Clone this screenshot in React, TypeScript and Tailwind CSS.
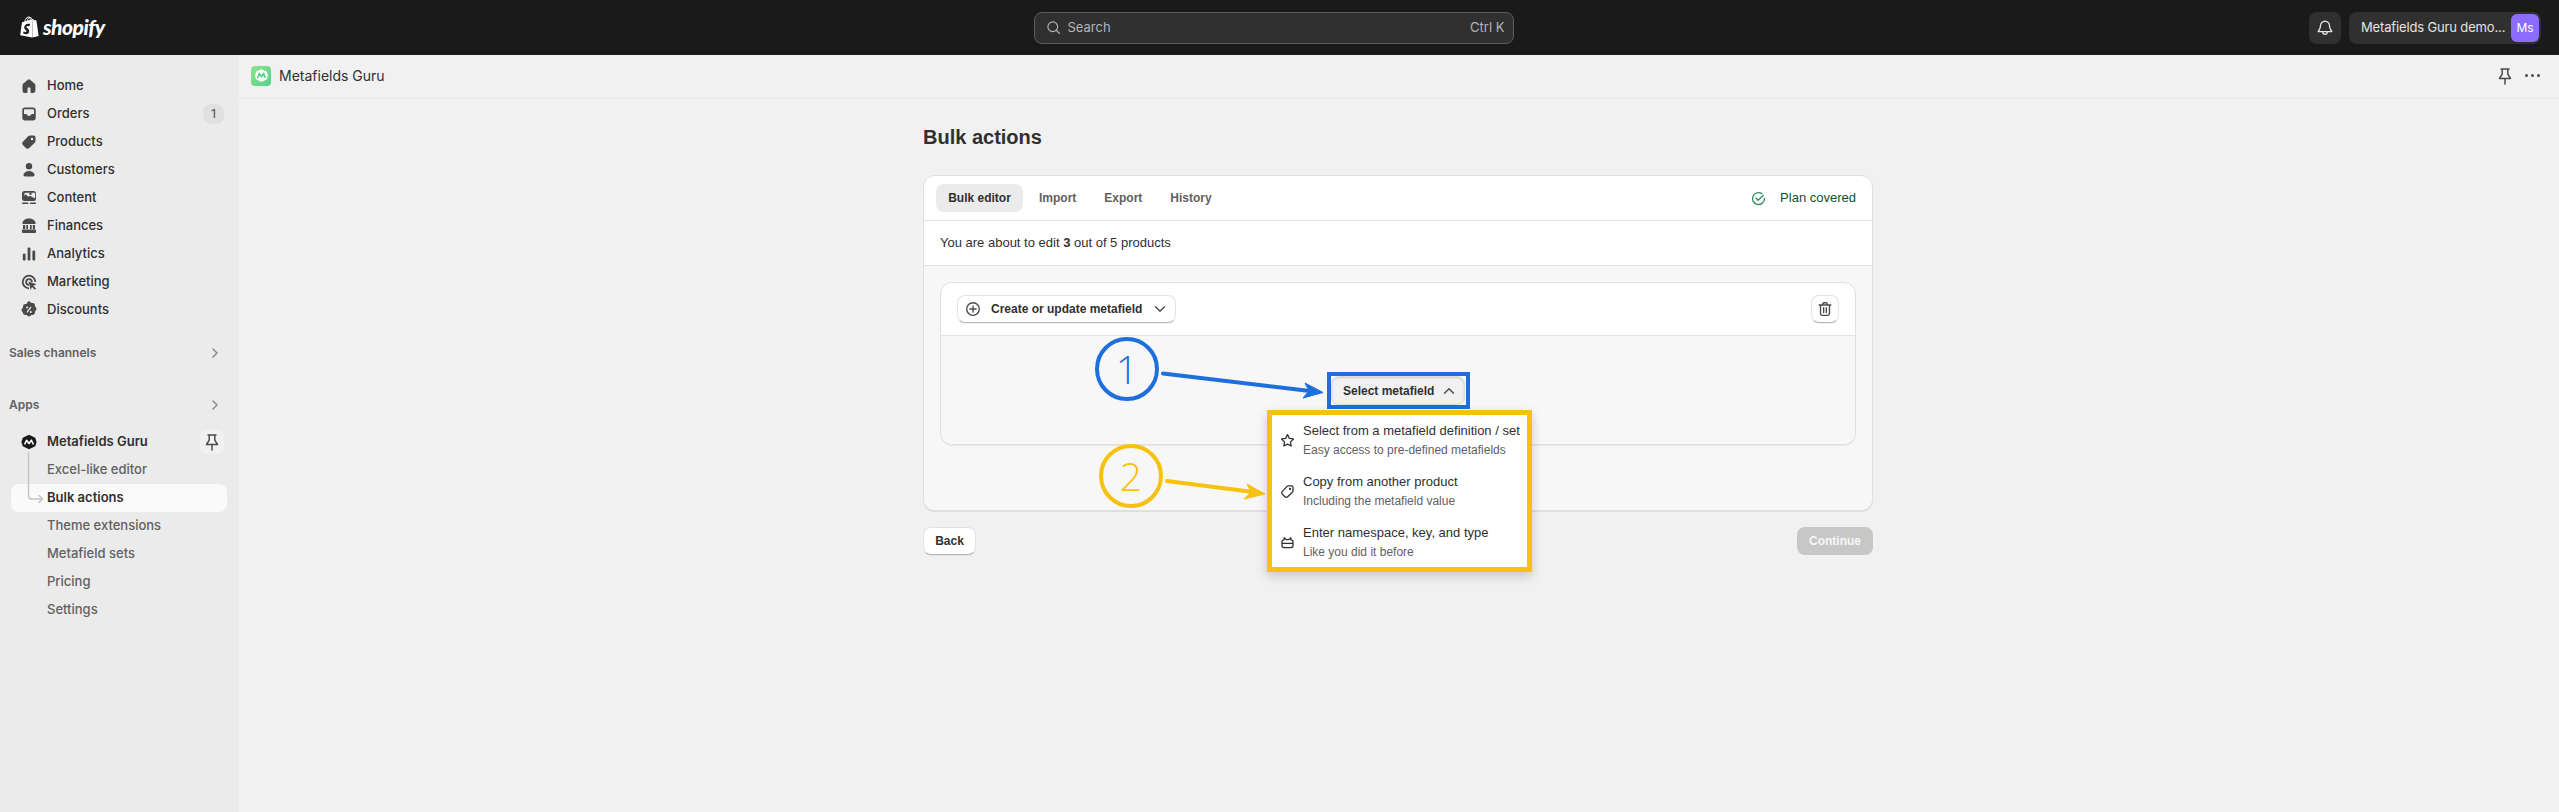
import React from "react";
import { SiShopify } from "react-icons/si";

const inter = "font-['Inter',sans-serif]";
const arial = "font-['Liberation_Sans',Arial,sans-serif]";

type IconProps = { className?: string };
const Ic = ({ children, className = "w-5 h-5 text-[#4a4a4a]" }: { children: React.ReactNode; className?: string }) => (
  <svg viewBox="0 0 20 20" fill="currentColor" className={`${className} shrink-0`}>{children}</svg>
);

const HomeI = () => <Ic><path d="M8.900 3.700a1.700 1.700 0 0 1 2.200 0l4.400 3.700c.6.5.9 1.100.9 1.900v5.400c0 1.200-1 2.300-2.300 2.300h-1.600c-.5 0-1-.4-1-1v-3.200a1.500 1.500 0 0 0-3 0V16c0 .6-.5 1-1 1H5.800a2.300 2.300 0 0 1-2.300-2.300V9.300c0-.8.3-1.400.9-1.900z" /></Ic>;
const OrdersI = () => <Ic><path fillRule="evenodd" d="M6 3.500h8A2.700 2.700 0 0 1 16.700 6.200v7.600A2.700 2.700 0 0 1 14 16.500H6a2.700 2.700 0 0 1-2.700-2.700V6.200A2.700 2.700 0 0 1 6 3.500M5 6.200v3.900h1.800c.7 0 1.200.4 1.500 1 .2.5.6.9 1.700.9s1.500-.4 1.700-.9c.3-.6.8-1 1.500-1H15V6.200C15 5.600 14.600 5.200 14 5.200H6c-.6 0-1 .4-1 1" /></Ic>;
const TagI = () => <Ic><path fillRule="evenodd" d="M11 3.500h3.700c1 0 1.800.8 1.800 1.800V9c0 .7-.3 1.300-.8 1.800l-5.500 5.300c-.9.900-2.400.9-3.300 0L3.900 13.100c-.9-.9-.9-2.400 0-3.300L9.200 4.300c.5-.5 1.100-.8 1.800-.8M13 8.200a1.200 1.200 0 1 0 0-2.400 1.200 1.200 0 0 0 0 2.400" /></Ic>;
const PersonI = () => <Ic><circle cx="10" cy="6.200" r="3.200" /><path d="M4.500 14.300c.8-2 2.900-3.300 5.500-3.300s4.700 1.300 5.500 3.300c.4 1.100-.4 2.200-1.600 2.200H6.100c-1.200 0-2-1.100-1.600-2.200" /></Ic>;
const ContentI = () => <Ic><path fillRule="evenodd" d="M5.500 3h9A2.500 2.500 0 0 1 17 5.500v5a2.500 2.500 0 0 1-2.500 2.500h-9A2.500 2.500 0 0 1 3 10.500v-5A2.500 2.500 0 0 1 5.500 3m-.8 5 2-1.800 2.300 2.300 2.500-.4 3.800 2.200c.5-.2.900-.8.900-1.300V5.500c0-.5-.4-.8-.9-.8h-9c-.5 0-.8.3-.8.800zM11.500 7a1.200 1.200 0 1 0 0-2.400 1.200 1.200 0 0 0 0 2.400" /><rect x="3" y="14.500" width="6.500" height="1.600" rx=".7" /><rect x="11" y="14.500" width="6" height="1.600" rx=".7" /></Ic>;
const BankI = () => <Ic><path d="M10 2.500c3.400 0 6.500 2 6.500 4.500v1H3.500V7c0-2.500 3.100-4.500 6.500-4.500" /><path d="M4 9h2.200v4H4zM7.300 9h1.700v4H7.300zM11 9h1.700v4H11zM13.800 9H16v4h-2.200z" /><path d="M3 13.500h14V16c0 .5-.4 1-1 1H4c-.6 0-1-.5-1-1z" /></Ic>;
const ChartI = () => <Ic><rect x="3.800" y="9.500" width="2.800" height="7" rx="1.200" /><rect x="8.600" y="3.500" width="2.800" height="13" rx="1.200" /><rect x="13.400" y="6.500" width="2.800" height="10" rx="1.200" /></Ic>;
const TargetI = () => <Ic><path fillRule="evenodd" d="M10 2.800a7.200 7.200 0 0 1 7.200 7.200h-1.800A5.400 5.400 0 1 0 10 15.400v1.800A7.200 7.200 0 1 1 10 2.800m0 3.400A3.800 3.800 0 0 1 13.800 10H12a2 2 0 1 0-2 2v1.800a3.800 3.800 0 1 1 0-7.600" /><path d="m9.500 9.500 8 2.700-3.200 1.500 2.800 2.800-1.300 1.300-2.800-2.800-1.300 3z" /></Ic>;
const DiscountI = () => <Ic><path fillRule="evenodd" d="M8.300 2.700a2.400 2.400 0 0 1 3.400 0l.7.7h1.200a2.400 2.400 0 0 1 2.400 2.400v1.100l.8.800a2.400 2.400 0 0 1 0 3.400l-.8.800v1.100a2.400 2.400 0 0 1-2.400 2.400h-1.200l-.7.700a2.400 2.400 0 0 1-3.400 0l-.7-.7H6.400A2.400 2.400 0 0 1 4 14.100V13l-.8-.8a2.400 2.400 0 0 1 0-3.400L4 8V6.900a2.400 2.400 0 0 1 2.400-2.400h1.200zM8.200 9a1 1 0 1 0 0-2 1 1 0 0 0 0 2m3.600 4.500a1 1 0 1 0 0-2 1 1 0 0 0 0 2m.7-5.500-.9-.9-4.100 5.300.9.800z" transform="translate(0 -.5)" /></Ic>;
const Pin = ({ className }: IconProps) => (
  <svg viewBox="0 0 20 20" fill="none" stroke="currentColor" strokeWidth="1.500" strokeLinejoin="round" strokeLinecap="round" className={className}>
    <path d="M6 3h8M7.200 3v5.200L4.500 12.500h11l-2.700-4.300V3M10 12.500V18" />
  </svg>
);
const Chevron = ({ up, right, className }: { up?: boolean; right?: boolean; className?: string }) => (
  <svg viewBox="0 0 20 20" fill="none" stroke="currentColor" strokeWidth="1.500" strokeLinecap="round" strokeLinejoin="round" className={className}>
    <path d={right ? "m8 6 4 4-4 4" : up ? "m5 12.500 5-5 5 5" : "m5 7.500 5 5 5-5"} />
  </svg>
);
const MBadge = () => (
  <svg viewBox="0 0 20 20" className="w-4 h-4 shrink-0">
    <path d="M10 .8 17.800 4.600 19.500 10 17.800 15.400 10 19.200 2.200 15.400.5 10 2.200 4.600z" fill="#1a1a1a" />
    <path d="M4.500 13 7 7.800 10 11.800 13 7.800 15.500 13" fill="none" stroke="#fff" strokeWidth="2" strokeLinejoin="round" />
  </svg>
);

const nav: [string, React.ReactNode][] = [
  ["Home", <HomeI />], ["Orders", <OrdersI />], ["Products", <TagI />], ["Customers", <PersonI />], ["Content", <ContentI />],
  ["Finances", <BankI />], ["Analytics", <ChartI />], ["Marketing", <TargetI />], ["Discounts", <DiscountI />],
];

function Sidebar() {
  return (
    <aside className={`w-[239px] shrink-0 bg-[#ebebeb] pt-[17px] ${inter} text-[13px] text-[#303030]`}>
      <div className="flex flex-col">
        {nav.map(([label, icon]) => (
          <div key={label} className="h-7 pl-[19px] pr-[15px] flex items-center font-[550]">
            <span className="w-7 flex">{icon}</span>
            <span className="flex-1">{label}</span>
            {label === "Orders" && <span className="w-[21px] h-5 rounded-lg bg-[#e0e0e0] text-[#616161] text-xs font-medium flex items-center justify-center">1</span>}
          </div>
        ))}
      </div>
      <div className="mt-[15px] h-7 pl-[9px] pr-[14px] flex items-center justify-between text-xs font-[600] text-[#616161]">
        <span>Sales channels</span><Chevron right className="w-5 h-5 text-[#8a8a8a]" />
      </div>
      <div className="mt-6 h-7 pl-[9px] pr-[14px] flex items-center justify-between text-xs font-[600] text-[#616161]">
        <span>Apps</span><Chevron right className="w-5 h-5 text-[#8a8a8a]" />
      </div>
      <div className="relative mt-[9px]">
        <div className="h-7 pl-[21px] pr-[15px] flex items-center font-[600]">
          <span className="w-[26px] flex"><MBadge /></span>
          <span className="flex-1">Metafields Guru</span>
          <span className="w-6 h-6 rounded-md bg-[#f1f1f1] flex items-center justify-center"><Pin className="w-5 h-5 text-[#4a4a4a]" /></span>
        </div>
        <svg viewBox="0 0 20 52" className="absolute left-[25px] top-[24px] w-5 h-[52px]" fill="none" stroke="#c4c4c4" strokeWidth="1.400" strokeLinecap="round" strokeLinejoin="round">
          <path d="M3.500 1v43c0 2 1 3 3 3h11M14 43.500l3.500 3.500-3.500 3.500" />
        </svg>
        <div className="text-[#616161] font-[450]">
          {["Excel-like editor", "Bulk actions", "Theme extensions", "Metafield sets", "Pricing", "Settings"].map((t) =>
            t === "Bulk actions" ? (
              <div key={t} className="mx-[11px] w-[216px] h-7 rounded-lg bg-[#fafafa] pl-9 flex items-center text-[#303030] font-[600]">{t}</div>
            ) : (
              <div key={t} className="h-7 pl-[47px] flex items-center">{t}</div>
            )
          )}
        </div>
      </div>
    </aside>
  );
}

function TopBar() {
  return (
    <header className={`h-[55px] shrink-0 bg-[#1a1a1a] flex items-center justify-between pl-[19px] pr-[18px] ${inter}`}>
      <div className="w-[400px] flex items-center text-white">
        <SiShopify className="w-[21px] h-[24px] -mt-[2px]" />
        <span className="ml-[3px] font-['Lato',sans-serif] italic font-black text-[21px] leading-none tracking-[-0.5px] -mt-[3px]">shopify</span>
      </div>
      <div className="w-[480px] h-8 rounded-lg bg-[#303030] border border-[#5c5c5c] flex items-center justify-between pl-[11px] pr-2 text-[13px] text-[#b5b5b5] -ml-[13px]">
        <div className="flex items-center gap-[7px]">
          <svg viewBox="0 0 20 20" fill="none" stroke="currentColor" strokeWidth="1.500" strokeLinecap="round" className="w-[15px] h-[15px]"><circle cx="9" cy="9" r="6.500" /><path d="m14 14 4 4" /></svg>
          <span>Search</span>
        </div>
        <span>Ctrl K</span>
      </div>
      <div className="w-[400px] flex items-center justify-end gap-2">
        <span className="w-8 h-8 rounded-lg bg-[#303030] flex items-center justify-center text-[#e3e3e3]">
          <svg viewBox="0 0 20 20" fill="none" stroke="currentColor" strokeWidth="1.500" strokeLinejoin="round" className="w-[18px] h-[18px]"><path d="M10 2.500a5 5 0 0 0-5 5c0 4-2.500 5.500-2.500 6.500h15c0-1-2.500-2.500-2.500-6.500a5 5 0 0 0-5-5ZM7.500 14.500a2.500 2.500 0 0 0 5 0" /></svg>
        </span>
        <div className="w-[192px] h-8 rounded-lg bg-[#303030] flex items-center justify-between pl-[12px] pr-[2px] text-[13px] tracking-[-0.15px] text-[#e3e3e3]">
          <span className="whitespace-nowrap">Metafields Guru demo...</span>
          <span className="w-7 h-7 shrink-0 rounded-md bg-[#8c6cff] text-white text-xs flex items-center justify-center">Ms</span>
        </div>
      </div>
    </header>
  );
}

function PluginHeader() {
  return (
    <div className="h-11 shrink-0 border-b border-[#e8e8e8] pl-3 pr-[19px] flex items-center justify-between">
      <div className="flex items-center gap-2">
        <span className="w-5 h-5 rounded-[4px] bg-gradient-to-br from-[#8fe58a] to-[#4fd28a] flex items-center justify-center -mt-[2px]">
          <svg viewBox="0 0 20 20" className="w-[17px] h-[17px]"><path d="M10 2.500 16.500 5.500 17.500 10 16.500 14.500 10 17.500 3.500 14.500 2.500 10 3.500 5.500z" fill="#fff" /><path d="M5.500 13 7.500 7.500 10 11.500 12.500 7.500 14.500 13" fill="none" stroke="#55d37e" strokeWidth="1.800" strokeLinejoin="round" /></svg>
        </span>
        <span className={`${inter} text-sm text-[#303030] -mt-[2px]`}>Metafields Guru</span>
      </div>
      <div className="flex items-center gap-[10px] text-[#4a4a4a] -mt-[2px]">
        <Pin className="w-5 h-5" />
        <span className="flex gap-[2.500px]"><i className="w-[3.500px] h-[3.500px] rounded-full bg-[#4a4a4a]" /><i className="w-[3.500px] h-[3.500px] rounded-full bg-[#4a4a4a]" /><i className="w-[3.500px] h-[3.500px] rounded-full bg-[#4a4a4a]" /></span>
      </div>
    </div>
  );
}

const btn = "bg-white rounded-lg border border-[#e3e3e3] border-b-[#b5b5b5] shadow-[0_1px_0_rgba(0,0,0,0.05)]";

function MenuItem({ icon, title, sub }: { icon: React.ReactNode; title: string; sub: string }) {
  return (
    <div className="h-[51px] flex items-center pl-[7px]">
      <span className="w-6 flex">{icon}</span>
      <div className="flex flex-col gap-[3px]">
        <span className="text-[13px] leading-[17px] text-[#303030] whitespace-nowrap">{title}</span>
        <span className="text-xs leading-[17px] text-[#616161] whitespace-nowrap">{sub}</span>
      </div>
    </div>
  );
}

function Card() {
  return (
    <div className="rounded-xl bg-white border border-[#e0e0e0] shadow-[0_1px_0_rgba(0,0,0,0.08)]">
      <div className="h-[45px] border-b border-[#e3e3e3] pl-3 pr-4 flex items-center justify-between">
        <div className="flex items-center text-xs font-bold text-[#616161]">
          <span className="w-[87px] h-7 rounded-lg bg-[#ebebeb] text-[#303030] flex items-center justify-center">Bulk editor</span>
          <span className="ml-[16px]">Import</span>
          <span className="ml-[28px]">Export</span>
          <span className="ml-[28px]">History</span>
        </div>
        <div className="flex items-center gap-[13px] text-[13px] text-[#0c5132]">
          <svg viewBox="0 0 20 20" fill="none" stroke="#2f8f63" strokeWidth="1.600" strokeLinecap="round" strokeLinejoin="round" className="w-[17px] h-[17px]"><path d="M17 10a7 7 0 1 1-3-5.700M7 9.500l2.500 2.500 6-5.500" /></svg>
          <span>Plan covered</span>
        </div>
      </div>
      <div className="h-[45px] border-b border-[#e3e3e3] pl-4 flex items-center text-[13px] text-[#303030]">
        <span>You are about to edit <b>3</b> out of 5 products</span>
      </div>
      <div className="bg-[#f7f7f7] rounded-b-xl px-4 pt-4 pb-[65px]">
        <div className="rounded-xl border border-[#e0e0e0] bg-white shadow-[0_1px_0_rgba(0,0,0,0.06)]">
          <div className="h-[53px] border-b border-[#e3e3e3] pl-4 pr-4 pb-px flex items-center justify-between">
            <div className={`${btn} w-[219px] h-7 flex items-center pl-[6px] text-xs font-bold text-[#303030]`}>
              <svg viewBox="0 0 20 20" fill="none" stroke="#4a4a4a" strokeWidth="1.500" strokeLinecap="round" className="w-[18px] h-[18px]"><circle cx="10" cy="10" r="7" /><path d="M10 6.500v7M6.500 10h7" /></svg>
              <span className="ml-[9px]">Create or update metafield</span>
              <Chevron className="w-[18px] h-[18px] ml-[9px] text-[#4a4a4a]" />
            </div>
            <div className={`${btn} w-7 h-7 flex items-center justify-center`}>
              <svg viewBox="0 0 20 20" fill="none" stroke="#4a4a4a" strokeWidth="1.500" strokeLinecap="round" strokeLinejoin="round" className="w-[18px] h-[18px]"><path d="M3.500 5.500h13M7.500 5.500V4.500a1.500 1.500 0 0 1 1.500-1.500h2a1.500 1.500 0 0 1 1.500 1.500v1M5 5.500V15a2 2 0 0 0 2 2h6a2 2 0 0 0 2-2V5.500M8.500 8.500v5.500M11.500 8.500v5.500" /></svg>
            </div>
          </div>
          <div className="h-[108px] rounded-b-xl bg-[#f7f7f7] pt-[40px] flex justify-center">
            <div className="relative w-[134px] h-[29px]">
              <div className="w-full h-full rounded-lg bg-[#f1f1f1] border border-[#dcdcdc] shadow-[inset_0_1px_2px_rgba(0,0,0,0.15)] flex items-center pl-[11px] gap-[6px] text-xs font-bold text-[#303030]">
                <span>Select metafield</span>
                <Chevron up className="w-[18px] h-[18px] text-[#4a4a4a]" />
              </div>
              <div className="absolute -left-[4px] -top-[4px] w-[143px] h-[37px] border-4 border-[#1d6fdc]" />
              <div className="absolute -left-[64px] top-[34px] w-[265px] h-[162px] bg-white border-[5px] border-[#f6c20f] shadow-[0_4px_10px_rgba(0,0,0,0.18)]">
                <MenuItem title="Select from a metafield definition / set" sub="Easy access to pre-defined metafields" icon={
                  <svg viewBox="0 0 20 20" fill="none" stroke="#303030" strokeWidth="1.500" strokeLinejoin="round" className="w-[17px] h-[17px]"><path d="m10 3 2.200 4.500 4.800.7-3.500 3.400.8 4.900-4.300-2.300-4.300 2.300.8-4.900L3 8.200l4.800-.7z" /></svg>
                } />
                <MenuItem title="Copy from another product" sub="Including the metafield value" icon={
                  <svg viewBox="0 0 20 20" fill="none" stroke="#303030" strokeWidth="1.500" strokeLinejoin="round" className="w-[17px] h-[17px]"><path d="M11 3.500h3.700c1 0 1.800.8 1.800 1.800V9c0 .7-.3 1.300-.8 1.800l-5.500 5.300c-.9.900-2.400.9-3.300 0L3.900 13.100c-.9-.9-.9-2.400 0-3.300L9.200 4.300c.5-.5 1.100-.8 1.800-.8Z" /><circle cx="13" cy="7" r=".6" /></svg>
                } />
                <MenuItem title="Enter namespace, key, and type" sub="Like you did it before" icon={
                  <svg viewBox="0 0 20 20" fill="none" stroke="#303030" strokeWidth="1.500" strokeLinejoin="round" className="w-[17px] h-[17px]"><path d="M3.500 9.500c0-1.500 1-2.500 2.500-2.500V4.500l2.500 2h3l2.500-2V7c1.500 0 2.500 1 2.500 2.500v4c0 1.500-1 2.500-2.500 2.500H6c-1.500 0-2.500-1-2.500-2.500zM3.500 11h13" /></svg>
                } />
              </div>
            </div>
          </div>
        </div>
      </div>
    </div>
  );
}

function Annotations() {
  return (
    <>
      <div className="absolute left-[1095px] top-[337px] w-[64px] h-[64px] rounded-full border-4 border-[#1d6fdc] flex items-center justify-center font-['Open_Sans',sans-serif] font-light text-[39px] text-[#1d6fdc]">1</div>
      <div className="absolute left-[1099px] top-[444px] w-[64px] h-[64px] rounded-full border-4 border-[#f6c20f] flex items-center justify-center font-['Open_Sans',sans-serif] font-light text-[39px] text-[#f6c20f]">2</div>
      <svg viewBox="0 0 200 140" className="absolute left-[1150px] top-[365px] w-[200px] h-[140px]" fill="none">
        <path d="M13 8.500 160 26" stroke="#1d6fdc" strokeWidth="4" strokeLinecap="round" />
        <path d="M173 27.500 155 18 159 26 153 33z" fill="#1d6fdc" stroke="#1d6fdc" strokeWidth="1" strokeLinejoin="round" />
        <path d="M17 116 103 127" stroke="#f6c20f" strokeWidth="4" strokeLinecap="round" />
        <path d="M115 129 97 119 101 127 94 134z" fill="#f6c20f" stroke="#f6c20f" strokeWidth="1" strokeLinejoin="round" />
      </svg>
    </>
  );
}

export default function App() {
  return (
    <div className="relative w-[2559px] h-[812px] overflow-hidden flex flex-col bg-[#f1f1f1]">
      <TopBar />
      <div className="flex-1 flex min-h-0">
        <Sidebar />
        <main className="flex-1 flex flex-col min-w-0">
          <PluginHeader />
          <div className={`flex justify-center pr-[2px] ${arial}`}>
            <div className="w-[950px]">
              <h1 className="h-[76px] flex items-center text-xl font-bold text-[#303030] pb-[1px]">Bulk actions</h1>
              <Card />
              <div className="mt-4 flex justify-between text-xs font-bold">
                <span className={`${btn} w-[53px] h-7 flex items-center justify-center text-[#303030]`}>Back</span>
                <span className="w-[76px] h-7 rounded-lg bg-[#c7c7c7] text-[#f7f7f7] flex items-center justify-center">Continue</span>
              </div>
            </div>
          </div>
        </main>
      </div>
      <div className={arial}><Annotations /></div>
    </div>
  );
}
